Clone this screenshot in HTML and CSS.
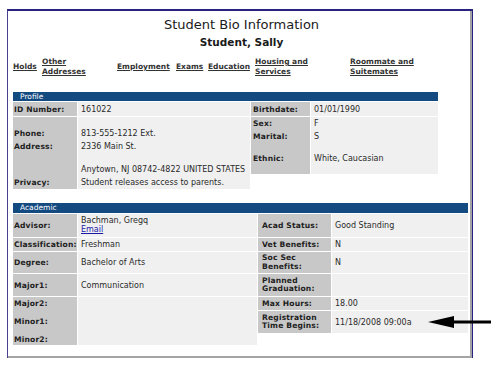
FILE: index.html
```html
<!DOCTYPE html>
<html>
<head>
<meta charset="utf-8">
<link rel="stylesheet" href="styles.css">
</head>
<body>
<div class="frame">
  <div class="inner">
    <h1 class="title">Student Bio Information</h1>
    <h2 class="name">Student, Sally</h2>
    <nav class="tabs">
      <a href="#">Holds</a>
      <a href="#">Other<br>Addresses</a>
      <a href="#">Employment</a>
      <a href="#">Exams</a>
      <a href="#">Education</a>
      <a href="#">Housing and<br>Services</a>
      <a href="#">Roommate and<br>Suitemates</a>
    </nav>

    <section class="block profile">
      <div class="bar">Profile</div>
      <div class="pgrid">
        <div class="lab row1">ID Number:</div>
        <div class="val row1">161022</div>
        <div class="lab row1 rl">Birthdate:</div>
        <div class="val row1">01/01/1990</div>

        <div class="lab lines-left">
          <div class="ln">Phone:</div>
          <div class="ln">Address:</div>
          <div class="sp"></div>
          <div class="ln"></div>
          <div class="ln">Privacy:</div>
        </div>
        <div class="val lines-left">
          <div class="ln">813-555-1212 Ext.</div>
          <div class="ln">2336 Main St.</div>
          <div class="sp"></div>
          <div class="ln">Anytown, NJ 08742-4822 UNITED STATES</div>
          <div class="ln">Student releases access to parents.</div>
        </div>
        <div class="lab lines-right rl">
          <div class="ln">Sex:</div>
          <div class="ln">Marital:</div>
          <div class="sp2"></div>
          <div class="ln">Ethnic:</div>
        </div>
        <div class="val lines-right">
          <div class="ln">F</div>
          <div class="ln">S</div>
          <div class="sp2"></div>
          <div class="ln">White, Caucasian</div>
        </div>
      </div>
    </section>

    <section class="block academic">
      <div class="bar">Academic</div>
      <div class="agrid">
        <div class="lab">Advisor:</div>
        <div class="val two"><span>Bachman, Gregq</span><a href="#" class="mail">Email</a></div>
        <div class="lab rl">Acad Status:</div>
        <div class="val">Good Standing</div>

        <div class="lab">Classification:</div>
        <div class="val">Freshman</div>
        <div class="lab rl">Vet Benefits:</div>
        <div class="val">N</div>

        <div class="lab">Degree:</div>
        <div class="val">Bachelor of Arts</div>
        <div class="lab rl two">Soc Sec<br>Benefits:</div>
        <div class="val">N</div>

        <div class="lab">Major1:</div>
        <div class="val">Communication</div>
        <div class="lab rl two">Planned<br>Graduation:</div>
        <div class="val"></div>

        <div class="lab span3">
          <div class="sub">Major2:</div>
          <div class="sub">Minor1:</div>
          <div class="sub">Minor2:</div>
        </div>
        <div class="val span3"></div>
        <div class="lab rl">Max Hours:</div>
        <div class="val">18.00</div>
        <div class="lab rl two">Registration<br>Time Begins:</div>
        <div class="val">11/18/2008 09:00a</div>
      </div>
    </section>
  </div>
</div>

<svg class="arrow" width="64" height="16" viewBox="0 0 64 16" aria-hidden="true">
  <polygon points="0,8 26,2 26,14" fill="#000"/>
  <rect x="25" y="6.5" width="38" height="3" fill="#000"/>
</svg>
</body>
</html>
```
FILE: styles.css
```css
html, body {
  margin: 0;
  padding: 0;
  background: #fff;
}
body {
  width: 500px;
  height: 368px;
  overflow: hidden;
  position: relative;
  font-family: "DejaVu Sans", Verdana, sans-serif;
  color: #222;
}

.frame {
  margin: 9px 0 0 7px;
  width: 464px;
  height: 347px;
  border-top: 2px solid #2a2280;
  border-left: 1px solid #4a4090;
  border-right: 1px solid #2a2280;
}
.inner {
  box-sizing: border-box;
  height: 100%;
  border-right: 2px solid #a4a4a4;
  border-bottom: 2px solid #a4a4a4;
  padding: 6px 0 0 5px;
}

.title {
  margin: 0;
  text-align: center;
  font-weight: normal;
  font-size: 13px;
  line-height: 16px;
  color: #1a1a1a;
}
.name {
  margin: 3px 0 0;
  text-align: center;
  font-size: 10.5px;
  line-height: 12px;
  font-weight: bold;
  color: #1a1a1a;
}

.tabs {
  margin-top: 9px;
  display: grid;
  grid-template-columns: 29px 75px 59px 32px 47px 95px 1fr;
  align-items: center;
  font-size: 7.5px;
  line-height: 10px;
  font-weight: bold;
}
.tabs a {
  color: #333;
  text-decoration: underline;
}

.bar {
  background: #134a7f;
  color: #fff;
  font-size: 7.5px;
  height: 9px;
  line-height: 9px;
  padding-left: 7px;
  margin-bottom: 1px;
}

.profile {
  margin-top: 15px;
  width: 425px;
}
.academic {
  margin-top: 14px;
  width: 455px;
}
.academic .bar {
  height: 10px;
  line-height: 10px;
}

.lab, .val {
  line-height: 9px;
  display: flex;
  flex-direction: column;
  justify-content: center;
}
.lab {
  background: #c8c8c8;
  font-weight: bold;
  font-size: 7.6px;
  letter-spacing: 0.15px;
  padding-left: 1px;
  color: #1e1e1e;
}
.val {
  background: #f0f0f0;
  font-size: 8px;
  padding-left: 3px;
  color: #2a2a2a;
}
.rl {
  padding-left: 2px;
}

.pgrid {
  display: grid;
  grid-template-columns: 64px 172px 59px 127px;
  grid-template-rows: 14px auto;
  gap: 1px;
  align-items: start;
}
.pgrid .row1 {
  height: 14px;
}
.lines-left {
  justify-content: flex-start;
  padding-top: 10px;
  height: 62px;
}
.lines-right {
  justify-content: flex-start;
  height: 57px;
}
.ln {
  height: 13px;
  line-height: 13px;
  white-space: nowrap;
}
.sp { height: 10px; }
.sp2 { height: 9px; }

.agrid {
  display: grid;
  grid-template-columns: 64px 179px 73px 136px;
  grid-template-rows: 23px 13px 21px 22px 13px 22px 11px;
  gap: 1px;
}
.agrid .rl {
  padding-left: 4px;
}
.two {
  line-height: 8.5px;
}
.mail {
  color: #1a1aa8;
  text-decoration: underline;
}
.span3 {
  grid-row: span 3;
  justify-content: flex-start;
}
.span3 .sub {
  display: flex;
  align-items: center;
}
.span3 .sub:nth-child(1) { height: 14px; }
.span3 .sub:nth-child(2) { height: 23px; }
.span3 .sub:nth-child(3) { height: 12px; }

.arrow {
  position: absolute;
  left: 428px;
  top: 314px;
}
```
